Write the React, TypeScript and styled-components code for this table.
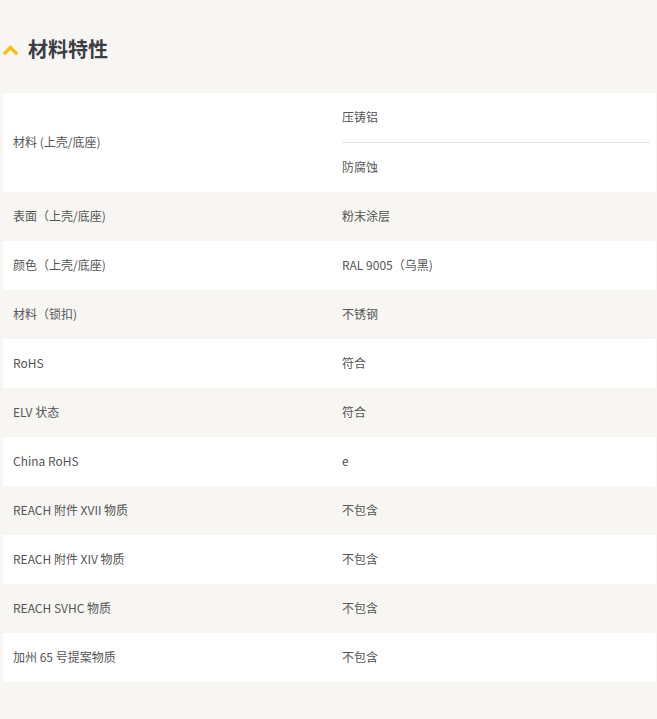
import React from "react";
import styled, { createGlobalStyle } from "styled-components";

const Global = createGlobalStyle`
  html, body { margin: 0; padding: 0; background: #f7f6f3; }
  body { font-family: "Noto Sans CJK SC", "Noto Sans", sans-serif; }
`;

const Page = styled.div`
  width: 657px;
  min-height: 719px;
  background: #f7f6f3;
  padding-top: 36px;
  box-sizing: border-box;
`;

const Heading = styled.div`
  display: flex;
  align-items: center;
  height: 26px;
  padding-left: 3px;
  gap: 10px;
`;

const ChevronIcon = styled.svg`
  margin-top: 2px;
  flex: none;
`;

const Title = styled.h2`
  margin: 0;
  font-size: 20px;
  font-weight: 700;
  color: #3d3d45;
  line-height: 26px;
`;

const Table = styled.div`
  margin: 31px 0 0 3px;
  width: 653px;
`;

const Row = styled.div<{ $alt: boolean }>`
  display: grid;
  grid-template-columns: 339px 1fr;
  background: ${(p) => (p.$alt ? "#f7f6f3" : "#ffffff")};
`;

const LabelCell = styled.div`
  display: flex;
  align-items: center;
  padding-left: 10px;
  padding-bottom: 2px;
  font-size: 12px;
  color: #555;
  min-height: 47px;
`;

const ValueCell = styled.div`
  display: flex;
  flex-direction: column;
  padding-right: 6px;
`;

const Value = styled.div<{ $divider?: boolean }>`
  display: flex;
  align-items: center;
  height: 49px;
  box-sizing: border-box;
  padding-bottom: 2px;
  font-size: 12px;
  color: #555;
  border-top: ${(p) => (p.$divider ? "1px solid #e6e6e6" : "none")};
  & + & { height: 50px; }
`;

const rows: { label: string; values: string[] }[] = [
  { label: "材料 (上壳/底座)", values: ["压铸铝", "防腐蚀"] },
  { label: "表面（上壳/底座)", values: ["粉末涂层"] },
  { label: "颜色（上壳/底座)", values: ["RAL 9005（乌黑)"] },
  { label: "材料（锁扣)", values: ["不锈钢"] },
  { label: "RoHS", values: ["符合"] },
  { label: "ELV 状态", values: ["符合"] },
  { label: "China RoHS", values: ["e"] },
  { label: "REACH 附件 XVII 物质", values: ["不包含"] },
  { label: "REACH 附件 XIV 物质", values: ["不包含"] },
  { label: "REACH SVHC 物质", values: ["不包含"] },
  { label: "加州 65 号提案物质", values: ["不包含"] },
];

const Chevron = () => (
  <ChevronIcon width="15" height="12" viewBox="0 0 15 12">
    <polyline
      points="2,9 7.5,3.5 13,9"
      fill="none"
      stroke="#f5c21b"
      strokeWidth="3.5"
      strokeLinecap="square"
    />
  </ChevronIcon>
);

export default function App() {
  return (
    <Page>
      <Global />
      <Heading>
        <Chevron />
        <Title>材料特性</Title>
      </Heading>
      <Table>
        {rows.map((r, i) => (
          <Row key={i} $alt={i % 2 === 1}>
            <LabelCell>{r.label}</LabelCell>
            <ValueCell>
              {r.values.map((v, j) => (
                <Value key={j} $divider={j > 0}>
                  {v}
                </Value>
              ))}
            </ValueCell>
          </Row>
        ))}
      </Table>
    </Page>
  );
}
